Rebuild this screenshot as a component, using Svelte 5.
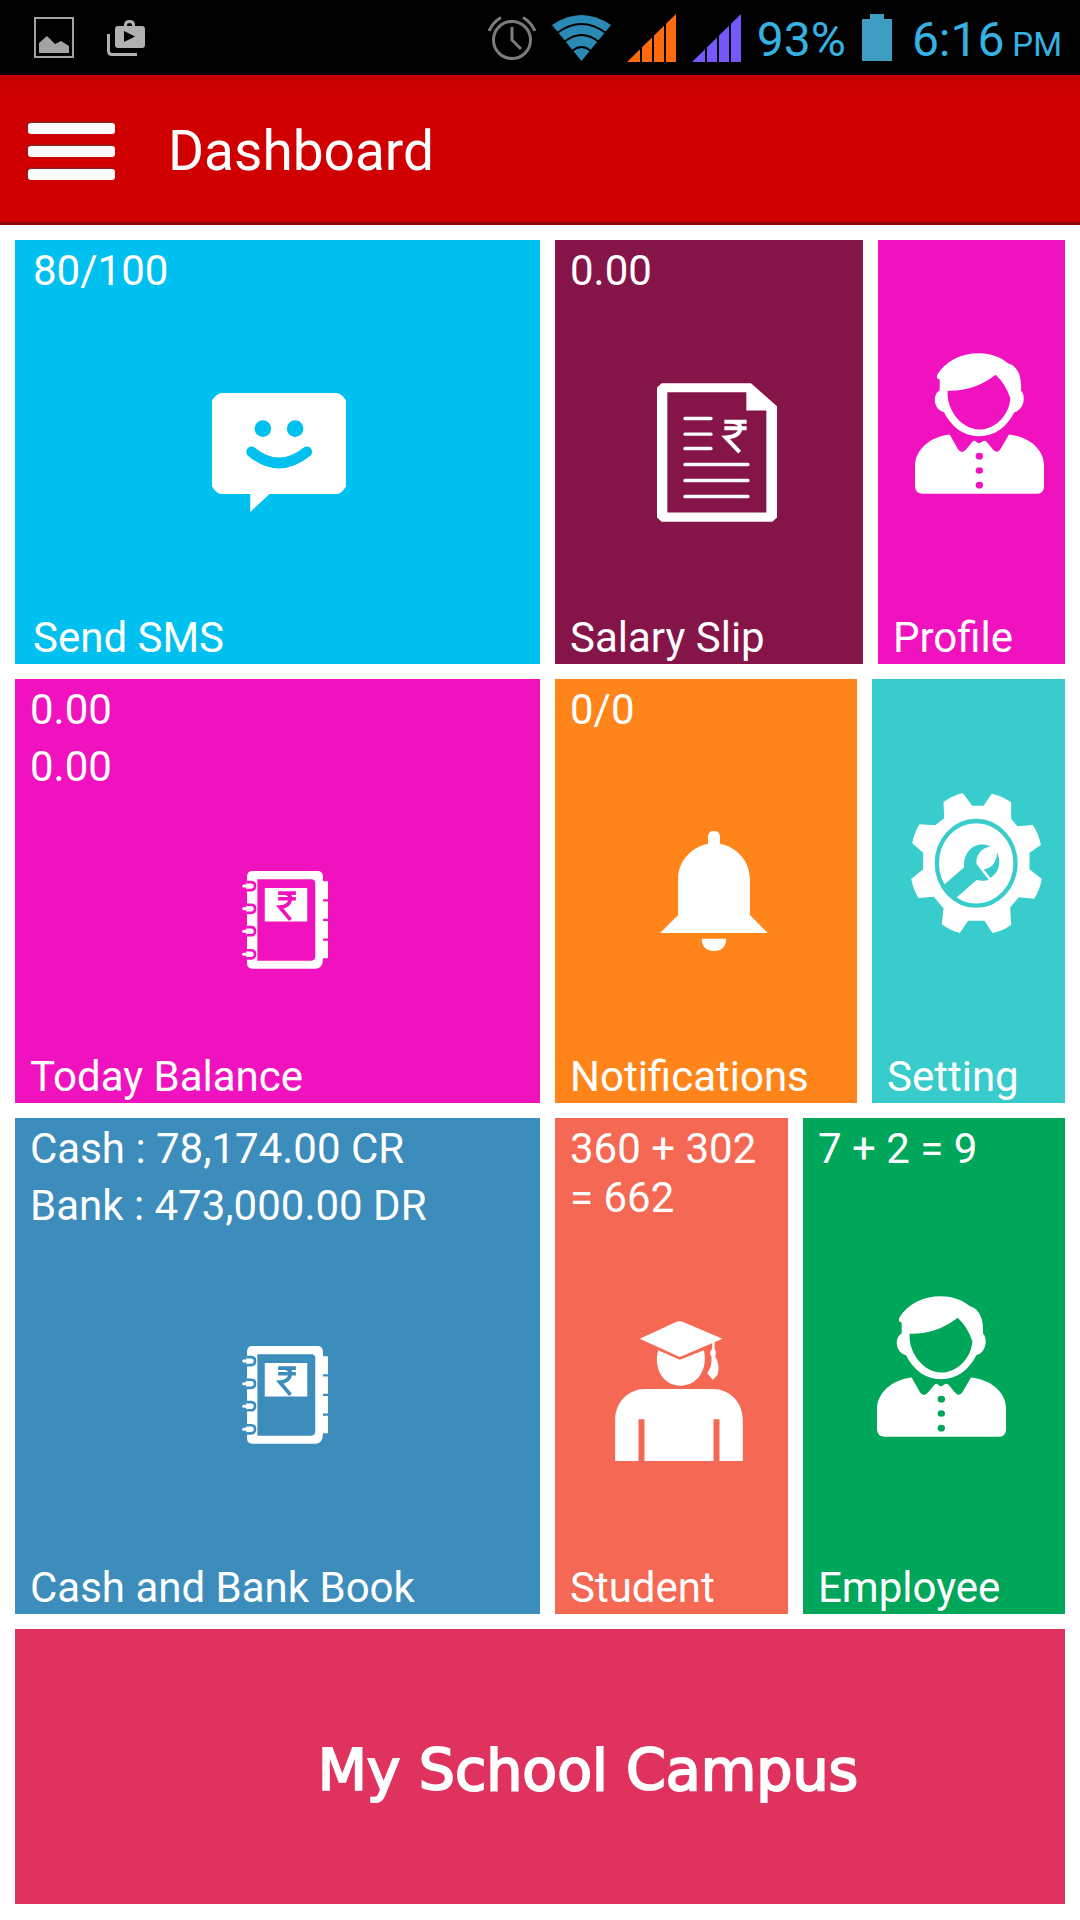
<!-- App.svelte - School dashboard with status bar, app header and metro tiles -->
<script lang="ts">
  interface Tile {
    label: string;
    lines: string[];
    icon: string;
    color: string;
  }

  const rows: { name: string; tiles: Tile[] }[] = [
    {
      name: 'first',
      tiles: [
        { label: 'Send SMS', lines: ['80/100'], icon: 'sms', color: 'sky' },
        { label: 'Salary Slip', lines: ['0.00'], icon: 'slip', color: 'plum' },
        { label: 'Profile', lines: [], icon: 'person', color: 'pink' }
      ]
    },
    {
      name: 'second',
      tiles: [
        { label: 'Today Balance', lines: ['0.00', '0.00'], icon: 'book', color: 'pink' },
        { label: 'Notifications', lines: ['0/0'], icon: 'bell', color: 'orange' },
        { label: 'Setting', lines: [], icon: 'gear', color: 'teal' }
      ]
    },
    {
      name: 'third',
      tiles: [
        {
          label: 'Cash and Bank Book',
          lines: ['Cash : 78,174.00 CR', 'Bank : 473,000.00 DR'],
          icon: 'book',
          color: 'blue'
        },
        { label: 'Student', lines: ['360 + 302 = 662'], icon: 'student', color: 'coral' },
        { label: 'Employee', lines: ['7 + 2 = 9'], icon: 'person', color: 'green' }
      ]
    }
  ];

  const signals = ['#ff6a0c', '#7657fb'];
</script>

<div class="screen">
  <div class="status-bar">
    <div class="status-group notices">
      <svg width="40" height="41" viewBox="0 0 40 41">
        <rect x="1" y="1" width="38" height="39" fill="none" stroke="#a3a3a3" stroke-width="2" />
        <path d="M5 36V26L13 19L21 27L27 24L35 29V36Z" fill="#a3a3a3" />
      </svg>
      <svg width="38" height="36" viewBox="0 0 38 36">
        <path d="M1.500 14V31Q1.500 34.500 5 34.500H30" fill="none" stroke="#b0b0b0" stroke-width="3" />
        <path
          d="M17 6V5Q17 0 22.500 0T28 5V6H35Q38 6 38 9V25Q38 28 35 28H11Q8 28 8 25V9Q8 6 11 6ZM20 6H25V5Q25 3 22.500 3T20 5ZM17 11V22L28 16.500Z"
          fill="#b0b0b0"
          fill-rule="evenodd"
        />
      </svg>
    </div>

    <div class="status-group system">
      <svg width="48" height="44" viewBox="0 0 48 44" fill="none" stroke="#7c7c7c" stroke-width="3">
        <ellipse cx="24" cy="24" rx="18.500" ry="18.500" />
        <path d="M24 11V24L33 33M1 15Q5 6 13 1.500M47 15Q43 6 35 1.500" />
      </svg>
      <svg width="59" height="46" viewBox="0 0 59 46">
        <path d="M0 10Q29.500 -10 59 10L29.500 46Z" fill="#2b8ab5" />
        <path
          d="M5 18Q29.500 0 54 18M12 27Q29.500 13 47 27M20 36Q29.500 28 39 36"
          fill="none"
          stroke="#000"
          stroke-width="2"
        />
      </svg>
      {#each signals as color}
        <svg width="49" height="48" viewBox="0 0 49 48">
          <path d="M0 48L49 0V48Z" fill={color} />
          <path d="M14 0V48M26 0V48M38 0V48" stroke="#000" stroke-width="2" />
        </svg>
      {/each}
      <span class="percent">93%</span>
      <svg width="30" height="47" viewBox="0 0 30 47">
        <path d="M0 5H8V0H22V5H30V47H0Z" fill="#3f9cc3" />
      </svg>
      <span class="clock">6:16 <small>PM</small></span>
    </div>
  </div>

  <header class="app-header">
    <button class="menu" aria-label="Menu">
      <span></span>
      <span></span>
      <span></span>
    </button>
    <h1>Dashboard</h1>
  </header>

  <main>
    {#each rows as row}
      <div class="row {row.name}">
        {#each row.tiles as tile}
          <button class="tile {tile.color}">
            <span class="values">
              {#each tile.lines as line}
                <span class="line">{line}</span>
              {/each}
            </span>
            <span class="icon">
              {#if tile.icon === 'sms'}
                <svg width="134" height="119" viewBox="65 70 403 358">
                  <path
                    d="M93 70H441Q455 72 468 92V351Q455 372 441 374H238L180 428V374H93Q78 372 65 351V92Q78 72 93 70Z"
                    fill="#fff"
                  />
                  <circle cx="218" cy="177" r="25" fill="var(--tile)" />
                  <circle cx="315" cy="177" r="25" fill="var(--tile)" />
                  <path d="M184 247Q266 314 350 247" fill="none" stroke="var(--tile)" stroke-width="32" stroke-linecap="round" />
                </svg>
              {:else if tile.icon === 'slip'}
                <svg width="120" height="139" viewBox="50 39 360 416">
                  <path
                    d="M64 39H332L410 108V442L396 455H64L50 442V52ZM81 66V427H378V121H318V66Z"
                    fill="#fff"
                    fill-rule="evenodd"
                  />
                  <path
                    d="M134 145H212M134 192H212M134 235H212M134 283H323M134 331H323M134 379H323"
                    stroke="#fff"
                    stroke-width="10"
                    stroke-linecap="round"
                  />
                  <path
                    d="M252 155H319M252 174H319M262 155Q300 153 300 174Q298 200 256 202L298 246"
                    fill="none"
                    stroke="#fff"
                    stroke-width="12"
                  />
                </svg>
              {:else if tile.icon === 'person'}
                <svg width="129" height="141" viewBox="75 42 387 422">
                  <path
                    d="M141 108C165 66 212 42 267 42C305 42 333 55 354 72C382 80 396 110 393 155C407 166 405 212 373 219C351 262 315 291 267 291C220 291 184 262 162 219C130 211 126 166 149 154V121L141 117ZM173 155C168 210 214 271 267 271C318 271 358 226 361 177Q347 135 317 107Q253 157 173 155Z"
                    fill="#fff"
                    fill-rule="evenodd"
                  />
                  <path
                    d="M179 286L204 330Q215 346 228 331L248 307Q253 302 260 309Q268 316 276 308Q283 301 291 309L309 331Q321 345 331 330L357 286C416 292 462 330 462 378V444Q460 464 440 464H96Q76 462 75 442V378C77 330 122 292 179 286Z"
                    fill="#fff"
                  />
                  <ellipse cx="268" cy="351" rx="11" ry="10" fill="var(--tile)" />
                  <ellipse cx="268" cy="394" rx="11" ry="10" fill="var(--tile)" />
                  <ellipse cx="268" cy="438" rx="11" ry="10" fill="var(--tile)" />
                </svg>
              {:else if tile.icon === 'book'}
                <svg width="86" height="98" viewBox="55 37 257 293">
                  <path d="M86 37H280Q297 37 297 54V68H312V298H297Q297 329 275 329H86Q70 329 70 313V54Q70 37 86 37Z" fill="#fff" />
                  <path d="M101 62H262Q274 62 274 74V293Q274 305 262 305H101Z" fill="var(--tile)" />
                  <path d="M123 88H250V188H123Z" fill="#fff" />
                  <path d="M297 125H312M297 183H312M297 242H312" stroke="var(--tile)" stroke-width="7" />
                  <path
                    d="M163 103H216M163 120H216M168 103Q200 101 200 120Q197 144 168 145L200 183"
                    fill="none"
                    stroke="var(--tile)"
                    stroke-width="11"
                  />
                  {#each [82, 150, 217, 286] as y}
                    <path d="M68 {y - 12}H82Q94 {y - 12} 94 {y}T82 {y + 12}H68" fill="#fff" stroke="var(--tile)" stroke-width="8" />
                    <path d="M60 {y}H80" stroke="#fff" stroke-width="9" stroke-linecap="round" />
                  {/each}
                </svg>
              {:else if tile.icon === 'bell'}
                <svg width="108" height="120" viewBox="60 36 324 361">
                  <path
                    d="M204 74V54Q204 36 222 36T240 54V74C292 84 330 128 330 180V289L384 343H60L114 289V180C114 128 152 84 204 74ZM185 360H259Q257 397 222 397T185 360Z"
                    fill="#fff"
                  />
                </svg>
              {:else if tile.icon === 'gear'}
                <svg width="131" height="140" viewBox="65 39 392 420">
                  <path
                    d="M162 66Q189 47 220 39L248 77H282L307 41Q338 48 365 67V117L384 139L430 135Q448 163 454 195L420 218V268L457 297Q451 330 434 356L388 352L362 382L365 434Q340 453 309 459L285 422H236L211 459Q181 452 157 433L162 385L133 350L87 354Q71 328 65 297L101 268V218L68 190Q74 159 90 133L137 136L164 115Z"
                    fill="#fff"
                  />
                  <ellipse cx="260" cy="250" rx="118" ry="127" fill="none" stroke="var(--tile)" stroke-width="13" />
                  <path
                    d="M162 316L224 262C220 212 259 180 303 199C276 205 258 225 261 252L298 300Q280 304 261 300L200 354Q178 340 162 316ZM322 217C337 246 329 277 303 294L283 268C307 266 323 245 322 217Z"
                    fill="var(--tile)"
                  />
                </svg>
              {:else}
                <svg width="128" height="140" viewBox="46 37 383 420">
                  <path d="M175 125L240 153L312 125C325 180 295 231 242 231C190 231 160 180 175 125Z" fill="#fff" />
                  <path d="M120 90L230 39Q239 36 248 39L368 90L240 145Z" fill="#fff" />
                  <path
                    d="M337 100H344V121Q352 132 346 142Q362 172 353 198L339 214L322 193Q337 175 335 144Q326 132 337 121Z"
                    fill="#fff"
                  />
                  <path
                    d="M136 241H339C391 241 429 282 429 334V457H359V332H341V457H134V332H116V457H46V334C46 282 84 241 136 241Z"
                    fill="#fff"
                  />
                </svg>
              {/if}
            </span>
            <span class="line">{tile.label}</span>
          </button>
        {/each}
      </div>
    {/each}

    <div class="banner">My School Campus</div>
  </main>
</div>

<style>
  :global(body) {
    background: #fff;
  }

  .screen {
    font-family: Roboto, 'Noto Sans', sans-serif;
    color: #fff;
  }

  svg {
    display: block;
    flex-shrink: 0;
  }

  .status-bar {
    display: flex;
    align-items: center;
    justify-content: space-between;
    height: 75px;
    padding: 0 18px 0 34px;
    background: #000;
    color: #35b2e2;
  }

  .status-group {
    display: flex;
    align-items: center;
    gap: 16px;
  }

  .notices {
    gap: 33px;
  }

  .percent,
  .clock {
    padding-top: 4px;
    font-size: 48px;
    line-height: 56px;
    white-space: nowrap;
  }

  .clock {
    margin-left: 4px;
  }

  .clock small {
    margin-left: -4px;
    font-size: 33px;
    line-height: 33px;
  }

  .app-header {
    display: flex;
    align-items: center;
    gap: 53px;
    box-sizing: border-box;
    height: 150px;
    padding: 5px 28px 0;
    background: linear-gradient(#c40000, #d00000 20px);
    border-bottom: 3px solid #8f0808;
  }

  .menu {
    display: flex;
    flex-direction: column;
    gap: 12px;
    width: 87px;
    padding: 0;
    border: 0;
    background: none;
  }

  .menu span {
    height: 11px;
    border-radius: 3px;
    background: #fafafa;
    box-shadow: -1px -1px 2px rgba(80, 60, 60, 0.8);
  }

  h1 {
    margin: 0;
    font-size: 55px;
    font-weight: 400;
    line-height: 60px;
  }

  main {
    display: flex;
    flex-direction: column;
    gap: 15px;
    padding: 15px;
  }

  .row {
    display: grid;
    gap: 15px;
    min-height: 424px;
  }

  .first {
    grid-template-columns: 525fr 308fr 187fr;
  }

  .second {
    grid-template-columns: 525fr 302fr 193fr;
  }

  .third {
    grid-template-columns: 525fr 233fr 262fr;
    min-height: 496px;
  }

  .tile {
    display: flex;
    flex-direction: column;
    min-width: 0;
    padding: 0 0 0 15px;
    border: 0;
    background: var(--tile);
    color: inherit;
    font: inherit;
    font-size: 42px;
    line-height: 49px;
    text-align: left;
  }

  .values {
    display: flex;
    flex-direction: column;
  }

  .line {
    padding: 6px 0 2px;
  }

  .icon {
    display: flex;
    flex: 1;
    align-items: center;
    justify-content: center;
  }

  .sky {
    --tile: #00c0f0;
    padding: 0 16px 0 18px;
  }

  .plum {
    --tile: #851449;
  }

  .pink {
    --tile: #f012be;
  }

  .orange {
    --tile: #ff851b;
  }

  .teal {
    --tile: #39cccc;
  }

  .blue {
    --tile: #3c8dbc;
  }

  .coral {
    --tile: #f56954;
  }

  .green {
    --tile: #00a65a;
  }

  .banner {
    display: flex;
    align-items: center;
    justify-content: center;
    box-sizing: border-box;
    min-height: 275px;
    padding: 6px 0 0 96px;
    background: #e0325e;
    font-family: 'DejaVu Sans', Verdana, sans-serif;
    font-size: 57px;
    line-height: 68px;
    -webkit-text-stroke: 2px #fff;
  }
</style>
